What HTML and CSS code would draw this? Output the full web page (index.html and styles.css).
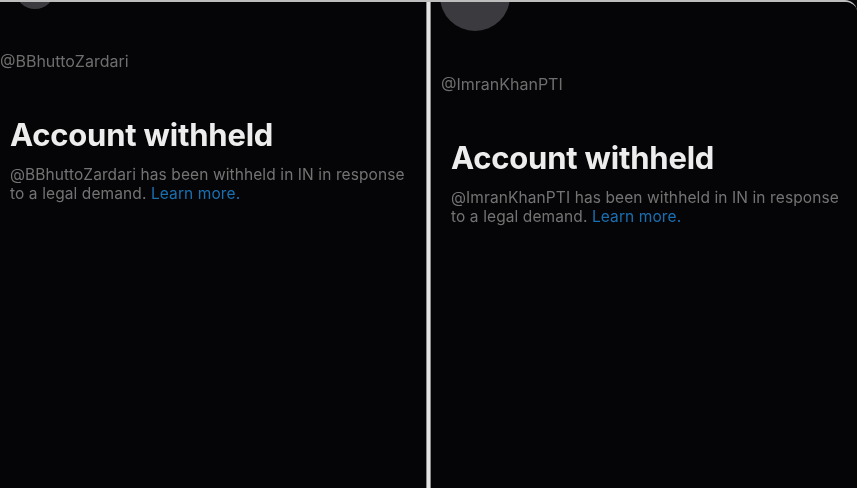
FILE: index.html
```html
<!DOCTYPE html>
<html lang="en">
<head>
  <meta charset="UTF-8">
  <meta name="viewport" content="width=device-width, initial-scale=1.0">
  <title>Account withheld</title>
  <link rel="stylesheet" href="styles.css">
</head>
<body>
  <div class="frame">
    <section class="panel panel-left">
      <div class="avatar"></div>
      <p class="handle">@BBhuttoZardari</p>
      <h1>Account withheld</h1>
      <p class="notice">@BBhuttoZardari has been withheld in IN in response<br>to a legal demand. <a href="#">Learn more.</a></p>
    </section>

    <div class="divider"></div>

    <section class="panel panel-right">
      <div class="avatar"></div>
      <p class="handle">@ImranKhanPTI</p>
      <h1>Account withheld</h1>
      <p class="notice">@ImranKhanPTI has been withheld in IN in response<br>to a legal demand. <a href="#">Learn more.</a></p>
    </section>
  </div>
</body>
</html>
```

FILE: styles.css
```css
* { box-sizing: border-box; margin: 0; padding: 0; }
html, body { height: 100%; }
body { background: #050507; font-family: Inter, "Noto Sans", sans-serif; color: #e7e9ea; overflow: hidden; }
.frame { display: flex; height: 488px; width: 857px; border-top: 2px solid #bdbdbd; border-top-right-radius: 12px; overflow: hidden; }
.panel { flex: 1; background: #050507; display: flex; flex-direction: column; overflow: hidden; }
.panel-left { flex: 0 0 426px; padding-left: 10px; }
.panel-right { flex: 1; padding-left: 20px; }
.divider { flex: 0 0 5px; background: #e4e4e4; border-left: 1px solid #8a8a8a; border-right: 1px solid #8a8a8a; }
.avatar { border-radius: 50%; background: #3b3b3f; flex-shrink: 0; }
.panel-left .avatar { width: 40px; height: 40px; margin: -33px 0 0 5px; }
.panel-right .avatar { width: 70px; height: 70px; margin: -41px 0 0 -11px; }
.handle { font-size: 16px; line-height: 19px; color: #6e6e6e; margin-left: -10px; filter: blur(0.5px); }
.panel-left .handle { margin-top: 43px; }
.panel-right .handle { margin-top: 44px; }
h1 { font-size: 31px; line-height: 38px; font-weight: 700; color: #ededed; letter-spacing: -0.2px; filter: blur(0.5px); }
.panel-left h1 { margin-top: 45px; }
.panel-right h1 { margin-top: 45px; }
.notice { font-size: 15.5px; line-height: 19px; color: #737373; letter-spacing: 0.1px; white-space: nowrap; filter: blur(0.5px); }
.panel-left .notice { margin-top: 11px; }
.panel-right .notice { margin-top: 11px; }
.notice a { color: #1a6fb0; text-decoration: none; }
```
